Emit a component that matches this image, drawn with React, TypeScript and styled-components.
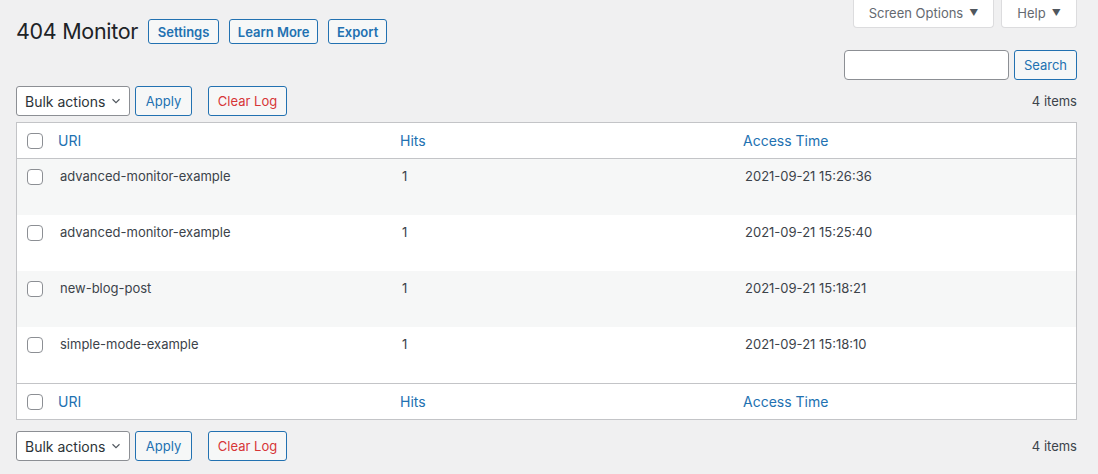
import React from 'react';
import styled, { createGlobalStyle } from 'styled-components';

const GlobalStyle = createGlobalStyle`
  html, body {
    margin: 0;
    padding: 0;
    background: #f0f0f1;
    font-family: Inter, "Noto Sans", "Liberation Sans", sans-serif;
    color: #3c434a;
    font-size: 13px;
  }
  * { box-sizing: border-box; }
`;

const Wrap = styled.div`
  padding: 0 21px 0 16px;
  width: 1098px;
`;

const TopBar = styled.div`
  display: flex;
  justify-content: space-between;
  align-items: flex-start;
  height: 50px;
`;

const TitleGroup = styled.div`
  display: flex;
  align-items: center;
  padding-top: 19px;
`;

const Title = styled.h1`
  margin: 0 10px 0 0;
  font-size: 21.5px;
  font-weight: 400;
  color: #1d2327;
  line-height: 25px;
  letter-spacing: -0.3px;
`;

const ActionButton = styled.a<{ $w: number }>`
  display: inline-flex;
  align-items: center;
  justify-content: center;
  width: ${p => p.$w}px;
  height: 25px;
  margin-right: 10px;
  border: 1px solid #2271b1;
  border-radius: 3px;
  background: #f6f7f7;
  color: #2271b1;
  font-size: 13px;
  font-weight: 600;
  text-decoration: none;
`;

const Tabs = styled.div`
  display: flex;
  gap: 7px;
`;

const Tab = styled.button<{ $w: number }>`
  width: ${p => p.$w}px;
  height: 28px;
  border: 1px solid #dcdcde;
  border-top: none;
  border-radius: 0 0 4px 4px;
  background: #fff;
  color: #646970;
  font-family: inherit;
  font-size: 13px;
  display: flex;
  align-items: center;
  justify-content: center;
  gap: 6px;
  padding: 0 0 2px;
`;

const Caret = styled.span`
  font-size: 9px;
  color: #50575e;
`;

const SearchRow = styled.div`
  display: flex;
  justify-content: flex-end;
  gap: 5px;
  height: 30px;
`;

const SearchInput = styled.input`
  width: 165px;
  height: 30px;
  border: 1px solid #8c8f94;
  border-radius: 4px;
  background: #fff;
`;

const Button = styled.button<{ $danger?: boolean; $w: number }>`
  width: ${p => p.$w}px;
  height: 30px;
  border: 1px solid #2271b1;
  border-radius: 3px;
  background: #f6f7f7;
  color: ${p => (p.$danger ? '#d63638' : '#2271b1')};
  font-family: inherit;
  font-size: 13px;
  padding: 0;
`;

const Nav = styled.div<{ $top: number }>`
  display: flex;
  align-items: center;
  height: 30px;
  margin-top: ${p => p.$top}px;
`;

const Select = styled.div`
  width: 114px;
  height: 30px;
  border: 1px solid #8c8f94;
  border-radius: 3px;
  background: #fff;
  color: #2c3338;
  font-size: 14px;
  display: flex;
  align-items: center;
  justify-content: space-between;
  padding: 0 6px 0 8px;
  margin-right: 5px;
`;

const Gap = styled.div<{ $w: number }>`
  width: ${p => p.$w}px;
`;

const Count = styled.div`
  margin-left: auto;
  font-size: 13px;
  color: #3c434a;
`;

const Table = styled.div`
  margin-top: 6px;
  border: 1px solid #c3c4c7;
  background: #fff;
`;

const Row = styled.div<{ $h: number; $striped?: boolean; $head?: 'top' | 'bottom' }>`
  display: grid;
  grid-template-columns: 41px 342px 343px 1fr;
  height: ${p => p.$h}px;
  align-items: ${p => (p.$head ? 'center' : 'start')};
  background: ${p => (p.$striped ? '#f6f7f7' : '#fff')};
  border-bottom: ${p => (p.$head === 'top' ? '1px solid #c3c4c7' : 'none')};
  border-top: ${p => (p.$head === 'bottom' ? '1px solid #c3c4c7' : 'none')};
`;

const CheckCell = styled.div<{ $head?: boolean }>`
  padding-left: 10px;
  padding-top: ${p => (p.$head ? 0 : 10)}px;
  display: flex;
`;

const Checkbox = styled.span`
  width: 16px;
  height: 16px;
  border: 1px solid #8c8f94;
  border-radius: 4px;
  background: #fff;
`;

const HeadCell = styled.a`
  color: #2271b1;
  font-size: 14px;
  text-decoration: none;
`;

const Cell = styled.div`
  padding: 8px 0 0 2px;
  font-size: 13px;
  line-height: 1.5;
  color: #3c434a;
`;

const Chevron = () => (
  <svg width="14" height="14" viewBox="0 0 20 20">
    <path d="M5 7.5l5 5 5-5" fill="none" stroke="#50575e" strokeWidth="1.6" />
  </svg>
);

const rows = [
  { uri: 'advanced-monitor-example', hits: 1, time: '2021-09-21 15:26:36' },
  { uri: 'advanced-monitor-example', hits: 1, time: '2021-09-21 15:25:40' },
  { uri: 'new-blog-post', hits: 1, time: '2021-09-21 15:18:21' },
  { uri: 'simple-mode-example', hits: 1, time: '2021-09-21 15:18:10' },
];

const TableNav: React.FC<{ top: number }> = ({ top }) => (
  <Nav $top={top}>
    <Select>
      Bulk actions
      <Chevron />
    </Select>
    <Button $w={57}>Apply</Button>
    <Gap $w={16} />
    <Button $w={79} $danger>Clear Log</Button>
    <Count>4 items</Count>
  </Nav>
);

const HeaderRow: React.FC<{ pos: 'top' | 'bottom' }> = ({ pos }) => (
  <Row $h={36} $head={pos}>
    <CheckCell $head>
      <Checkbox />
    </CheckCell>
    <HeadCell>URI</HeadCell>
    <HeadCell>Hits</HeadCell>
    <HeadCell>Access Time</HeadCell>
  </Row>
);

export default function App() {
  return (
    <>
      <GlobalStyle />
      <Wrap>
        <TopBar>
          <TitleGroup>
            <Title>404 Monitor</Title>
            <ActionButton $w={71}>Settings</ActionButton>
            <ActionButton $w={89}>Learn More</ActionButton>
            <ActionButton $w={59}>Export</ActionButton>
          </TitleGroup>
          <Tabs>
            <Tab $w={141}>
              Screen Options <Caret>▼</Caret>
            </Tab>
            <Tab $w={76}>
              Help <Caret>▼</Caret>
            </Tab>
          </Tabs>
        </TopBar>
        <SearchRow>
          <SearchInput />
          <Button $w={63}>Search</Button>
        </SearchRow>
        <TableNav top={6} />
        <Table>
          <HeaderRow pos="top" />
          {rows.map((r, i) => (
            <Row key={i} $h={56} $striped={i % 2 === 0}>
              <CheckCell>
                <Checkbox />
              </CheckCell>
              <Cell>{r.uri}</Cell>
              <Cell>{r.hits}</Cell>
              <Cell>{r.time}</Cell>
            </Row>
          ))}
          <HeaderRow pos="bottom" />
        </Table>
        <TableNav top={11} />
      </Wrap>
    </>
  );
}
